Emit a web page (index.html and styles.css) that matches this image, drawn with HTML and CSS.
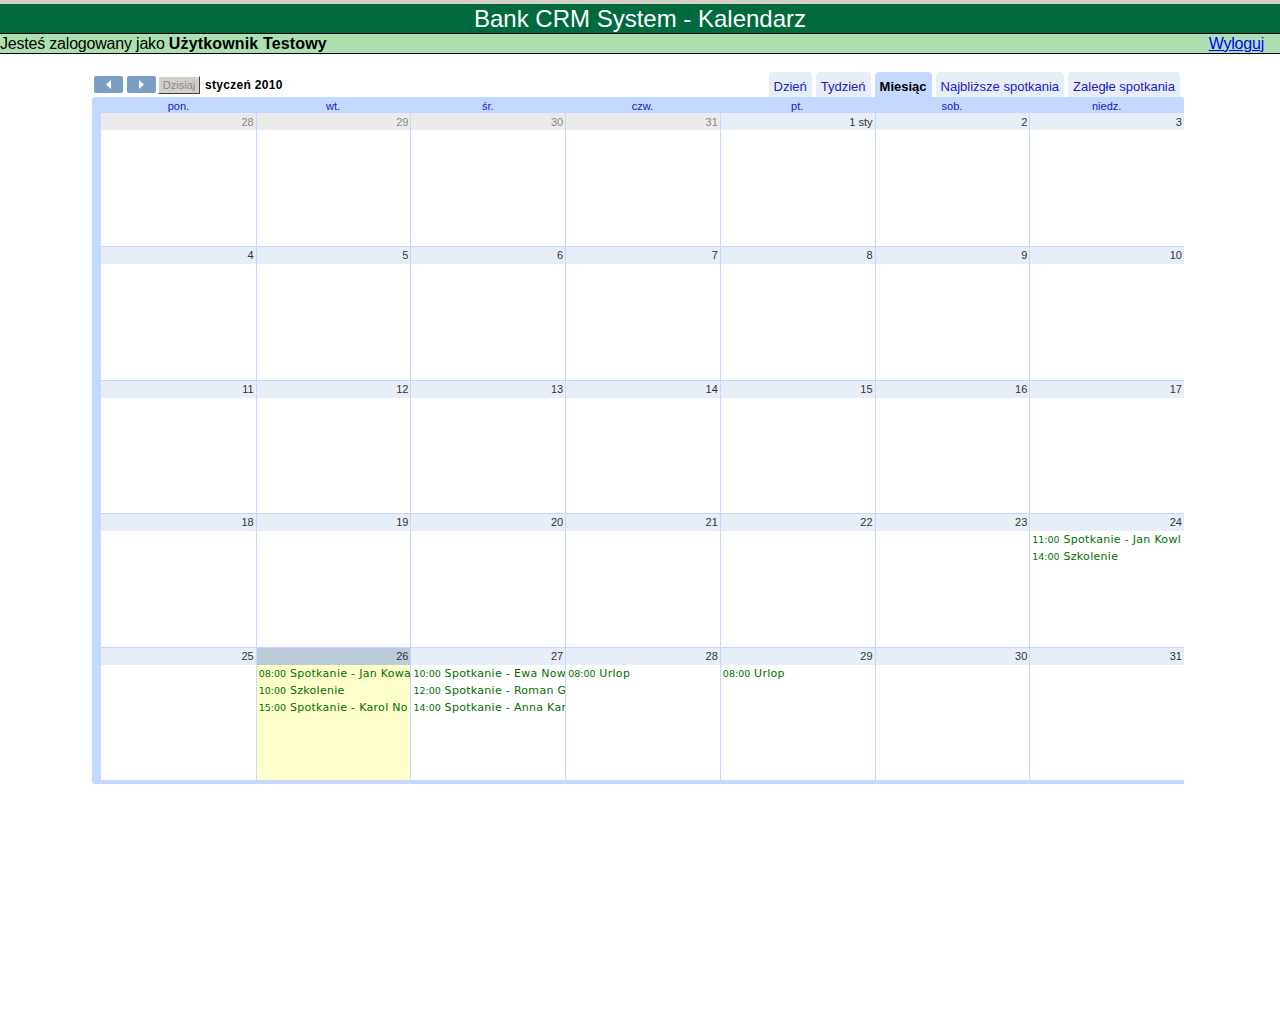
FILE: index.html
```html
<!DOCTYPE html>
<html lang="pl">
<head>
<meta charset="utf-8">
<title>Bank CRM System - Kalendarz</title>
<link rel="stylesheet" href="styles.css">
</head>
<body>
<div class="topline"></div>
<header class="title-bar">Bank CRM System - Kalendarz</header>
<div class="user-bar">
  <span>Jesteś zalogowany jako <b>Użytkownik Testowy</b></span>
  <a href="#" class="logout">Wyloguj</a>
</div>

<div class="cal">
  <div class="toolbar">
    <div class="nav">
      <button class="navbtn" aria-label="poprzedni"><svg width="7" height="9" viewBox="0 0 7 9"><path d="M6 0 L1 4.5 L6 9 Z" fill="#fff"/></svg></button>
      <button class="navbtn" aria-label="następny"><svg width="7" height="9" viewBox="0 0 7 9"><path d="M1 0 L6 4.5 L1 9 Z" fill="#fff"/></svg></button>
      <button class="today-btn">Dzisiaj</button>
      <span class="period">styczeń 2010</span>
    </div>
    <div class="tabs">
      <span class="tab">Dzień</span>
      <span class="tab">Tydzień</span>
      <span class="tab tab-active">Miesiąc</span>
      <span class="tab">Najbliższe spotkania</span>
      <span class="tab">Zaległe spotkania</span>
    </div>
  </div>

  <div class="frame">
    <div class="daynames">
      <span>pon.</span><span>wt.</span><span>śr.</span><span>czw.</span><span>pt.</span><span>sob.</span><span>niedz.</span>
    </div>
    <div class="grid">
      <div class="cell"><div class="dn out">28</div></div>
      <div class="cell"><div class="dn out">29</div></div>
      <div class="cell"><div class="dn out">30</div></div>
      <div class="cell"><div class="dn out">31</div></div>
      <div class="cell"><div class="dn">1 sty</div></div>
      <div class="cell"><div class="dn">2</div></div>
      <div class="cell"><div class="dn">3</div></div>

      <div class="cell"><div class="dn">4</div></div>
      <div class="cell"><div class="dn">5</div></div>
      <div class="cell"><div class="dn">6</div></div>
      <div class="cell"><div class="dn">7</div></div>
      <div class="cell"><div class="dn">8</div></div>
      <div class="cell"><div class="dn">9</div></div>
      <div class="cell"><div class="dn">10</div></div>

      <div class="cell"><div class="dn">11</div></div>
      <div class="cell"><div class="dn">12</div></div>
      <div class="cell"><div class="dn">13</div></div>
      <div class="cell"><div class="dn">14</div></div>
      <div class="cell"><div class="dn">15</div></div>
      <div class="cell"><div class="dn">16</div></div>
      <div class="cell"><div class="dn">17</div></div>

      <div class="cell"><div class="dn">18</div></div>
      <div class="cell"><div class="dn">19</div></div>
      <div class="cell"><div class="dn">20</div></div>
      <div class="cell"><div class="dn">21</div></div>
      <div class="cell"><div class="dn">22</div></div>
      <div class="cell"><div class="dn">23</div></div>
      <div class="cell"><div class="dn">24</div>
        <div class="ev"><span class="t">11:00</span> Spotkanie - Jan Kowl</div>
        <div class="ev"><span class="t">14:00</span> Szkolenie</div>
      </div>

      <div class="cell"><div class="dn">25</div></div>
      <div class="cell today"><div class="dn">26</div>
        <div class="ev"><span class="t">08:00</span> Spotkanie - Jan Kowa</div>
        <div class="ev"><span class="t">10:00</span> Szkolenie</div>
        <div class="ev"><span class="t">15:00</span> Spotkanie - Karol No</div>
      </div>
      <div class="cell"><div class="dn">27</div>
        <div class="ev"><span class="t">10:00</span> Spotkanie - Ewa Now</div>
        <div class="ev"><span class="t">12:00</span> Spotkanie - Roman G</div>
        <div class="ev"><span class="t">14:00</span> Spotkanie - Anna Kar</div>
      </div>
      <div class="cell"><div class="dn">28</div>
        <div class="ev"><span class="t">08:00</span> Urlop</div>
      </div>
      <div class="cell"><div class="dn">29</div>
        <div class="ev"><span class="t">08:00</span> Urlop</div>
      </div>
      <div class="cell"><div class="dn">30</div></div>
      <div class="cell"><div class="dn">31</div></div>
    </div>
  </div>
</div>
</body>
</html>
```
FILE: styles.css
```css
html, body {
  margin: 0;
  padding: 0;
  background: #fff;
  font-family: "Liberation Sans", Arial, sans-serif;
}

.topline {
  height: 4px;
  background: #d4d0c8;
}

.title-bar {
  height: 29px;
  line-height: 30px;
  background: #006a3f;
  color: #fff;
  font-size: 24px;
  text-align: center;
  border-bottom: 1px solid #000;
}

.user-bar {
  height: 19px;
  line-height: 20px;
  background: #ade0b0;
  border-bottom: 1px solid #000;
  font-size: 16px;
  color: #000;
  display: flex;
  justify-content: space-between;
  padding-right: 16px;
  letter-spacing: -0.2px;
}

.user-bar b {
  letter-spacing: 0.15px;
}

.logout {
  color: #0000ff;
  text-decoration: underline;
}

.cal {
  margin: 18px 0 0 92px;
  width: 1092px;
}

.toolbar {
  display: flex;
  justify-content: space-between;
  height: 25px;
}

.nav {
  display: flex;
  align-items: flex-start;
  padding: 4px 0 0 2px;
  gap: 4px;
}

.navbtn {
  width: 29px;
  height: 17px;
  padding: 0;
  border: none;
  border-radius: 2px;
  background: #7b9ec3;
  display: flex;
  align-items: center;
  justify-content: center;
}

.today-btn {
  margin-left: -2px;
  width: 42px;
  height: 18px;
  padding: 0;
  background: #d4d0c8;
  border: 1px solid;
  border-color: #fff #404040 #404040 #fff;
  font-family: "Liberation Sans", Arial, sans-serif;
  font-size: 11px;
  color: #8a8a8a;
}

.period {
  font-size: 12px;
  font-weight: bold;
  color: #000;
  line-height: 18px;
  margin-left: 1px;
  letter-spacing: 0.3px;
}

.tabs {
  display: flex;
  gap: 4px;
  padding-right: 4px;
}

.tab {
  background: #e8eef7;
  border-radius: 4px 4px 0 0;
  padding: 0 5px;
  height: 25px;
  line-height: 29px;
  font-size: 13px;
  color: #2020c0;
}

.tab-active {
  background: #c3d9ff;
  color: #000;
  font-weight: bold;
}

.frame {
  background: #c3d9ff;
  border-radius: 4px 4px 0 3px;
  padding: 0 0 4px 9px;
}

.daynames {
  display: grid;
  grid-template-columns: repeat(7, 1fr);
  height: 16px;
  line-height: 18px;
  font-size: 11px;
  color: #2020c0;
  text-align: center;
}

.grid {
  display: grid;
  grid-template-columns: repeat(7, 1fr);
  grid-template-rows: repeat(5, 1fr);
  height: 667px;
  background: #fff;
}

.cell {
  border-left: 1px solid #c3d9ff;
  border-top: 1px solid #c3d9ff;
  overflow: hidden;
  min-width: 0;
}

.cell:nth-child(7n+1) {
  border-left: none;
}

.cell:nth-child(-n+7) {
  border-top: none;
}

.cell:nth-child(-n+7) .dn {
  line-height: 18px;
}

.dn {
  height: 17px;
  line-height: 17px;
  background: #e8eef7;
  text-align: right;
  padding-right: 2px;
  font-size: 11px;
  color: #333;
}

.dn.out {
  background: #ebebeb;
  color: #888;
}

.today {
  background: #ffffcc;
}

.today .dn {
  background: #bccbda;
}

.ev {
  height: 17px;
  line-height: 18px;
  padding-left: 2px;
  white-space: nowrap;
  overflow: hidden;
  font-family: "DejaVu Sans", Verdana, sans-serif;
  font-size: 11px;
  letter-spacing: 0.3px;
  color: #007000;
}

.ev .t {
  font-size: 9.5px;
  letter-spacing: 0;
}
```
